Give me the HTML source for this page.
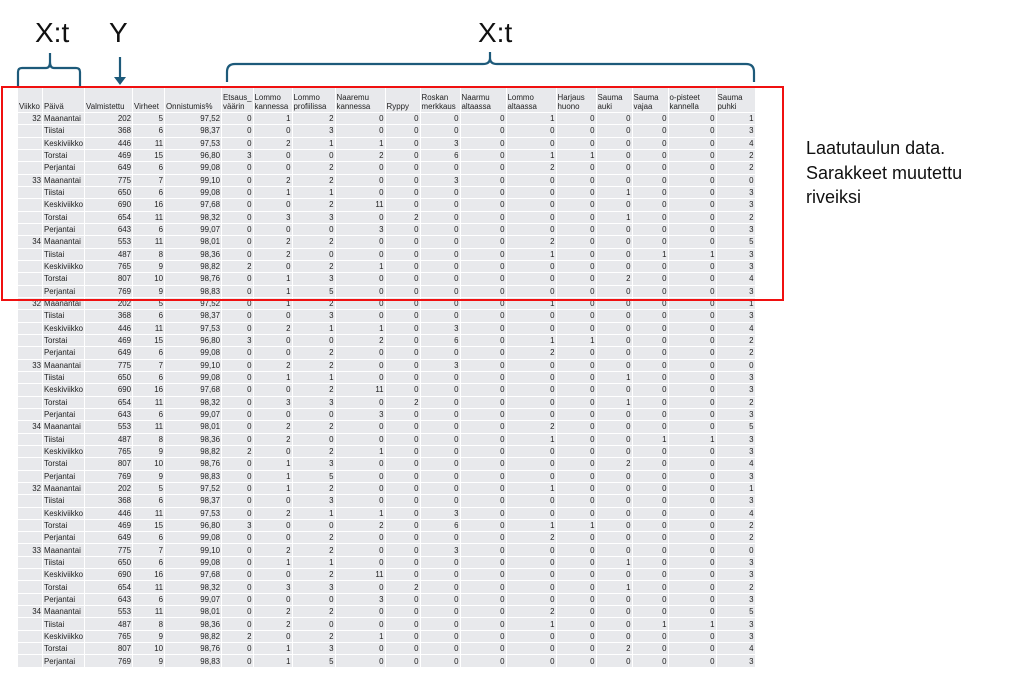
<!DOCTYPE html>
<html><head><meta charset="utf-8"><style>
body{margin:0;width:1024px;height:675px;background:#fff;position:relative;overflow:hidden;font-family:"Liberation Sans",sans-serif}
table{position:absolute;left:17px;top:86px;border-collapse:separate;border-spacing:1px;table-layout:fixed;font-size:7.9px;color:#222}
td{background:#e8e9ec;height:11.33px;padding:0 1px;text-align:right;white-space:nowrap;overflow:hidden;line-height:11px}
td.l{text-align:left}
tr.h td{height:24px;vertical-align:bottom;text-align:left;line-height:9px;padding-bottom:1px}
.box{position:absolute;left:1px;top:86px;width:779px;height:211px;border:2px solid #f01010}
.lab{position:absolute;font-size:28px;color:#111;line-height:28px}
.note{position:absolute;left:806px;top:136px;font-size:18px;line-height:24.5px;color:#111}
</style></head><body>
<div class="lab" style="left:35px;top:19px">X:t</div>
<div class="lab" style="left:109px;top:19px">Y</div>
<div class="lab" style="left:478px;top:19px">X:t</div>
<svg style="position:absolute;left:0;top:0" width="1024" height="100">
<g fill="none" stroke="#1d5a7a" stroke-width="2.2">
<path d="M18,86 V72 Q18,68 22,68 H46 Q50,68 50,62 V53 M50,62 Q50,68 54,68 H76 Q80,68 80,72 V86"/>
<path d="M120,57 V80"/>
<path d="M227,82 V72 Q227,64 235,64 H483 Q490,64 490,58 V52 M490,58 Q490,64 497,64 H746 Q754,64 754,72 V82"/>
</g>
<path d="M114,77 L126,77 L120,85 Z" fill="#1d5a7a"/>
</svg>
<div class="note">Laatutaulun data.<br>Sarakkeet muutettu<br>riveiksi</div>
<table>
<colgroup><col style="width:24px"><col style="width:41px"><col style="width:47px"><col style="width:31px"><col style="width:56px"><col style="width:30px"><col style="width:38px"><col style="width:42px"><col style="width:49px"><col style="width:34px"><col style="width:39px"><col style="width:45px"><col style="width:49px"><col style="width:39px"><col style="width:35px"><col style="width:35px"><col style="width:47px"><col style="width:38px"></colgroup>
<tr class="h"><td>Viikko</td><td>Päivä</td><td>Valmistettu</td><td>Virheet</td><td>Onnistumis%</td><td>Etsaus_<br>väärin</td><td>Lommo<br>kannessa</td><td>Lommo<br>profiilissa</td><td>Naaremu<br>kannessa</td><td>Ryppy</td><td>Roskan<br>merkkaus</td><td>Naarmu<br>altaassa</td><td>Lommo<br>altaassa</td><td>Harjaus<br>huono</td><td>Sauma<br>auki</td><td>Sauma<br>vajaa</td><td>o-pisteet<br>kannella</td><td>Sauma<br>puhki</td></tr>
<tr><td>32</td><td class="l">Maanantai</td><td>202</td><td>5</td><td>97,52</td><td>0</td><td>1</td><td>2</td><td>0</td><td>0</td><td>0</td><td>0</td><td>1</td><td>0</td><td>0</td><td>0</td><td>0</td><td>1</td></tr>
<tr><td></td><td class="l">Tiistai</td><td>368</td><td>6</td><td>98,37</td><td>0</td><td>0</td><td>3</td><td>0</td><td>0</td><td>0</td><td>0</td><td>0</td><td>0</td><td>0</td><td>0</td><td>0</td><td>3</td></tr>
<tr><td></td><td class="l">Keskiviikko</td><td>446</td><td>11</td><td>97,53</td><td>0</td><td>2</td><td>1</td><td>1</td><td>0</td><td>3</td><td>0</td><td>0</td><td>0</td><td>0</td><td>0</td><td>0</td><td>4</td></tr>
<tr><td></td><td class="l">Torstai</td><td>469</td><td>15</td><td>96,80</td><td>3</td><td>0</td><td>0</td><td>2</td><td>0</td><td>6</td><td>0</td><td>1</td><td>1</td><td>0</td><td>0</td><td>0</td><td>2</td></tr>
<tr><td></td><td class="l">Perjantai</td><td>649</td><td>6</td><td>99,08</td><td>0</td><td>0</td><td>2</td><td>0</td><td>0</td><td>0</td><td>0</td><td>2</td><td>0</td><td>0</td><td>0</td><td>0</td><td>2</td></tr>
<tr><td>33</td><td class="l">Maanantai</td><td>775</td><td>7</td><td>99,10</td><td>0</td><td>2</td><td>2</td><td>0</td><td>0</td><td>3</td><td>0</td><td>0</td><td>0</td><td>0</td><td>0</td><td>0</td><td>0</td></tr>
<tr><td></td><td class="l">Tiistai</td><td>650</td><td>6</td><td>99,08</td><td>0</td><td>1</td><td>1</td><td>0</td><td>0</td><td>0</td><td>0</td><td>0</td><td>0</td><td>1</td><td>0</td><td>0</td><td>3</td></tr>
<tr><td></td><td class="l">Keskiviikko</td><td>690</td><td>16</td><td>97,68</td><td>0</td><td>0</td><td>2</td><td>11</td><td>0</td><td>0</td><td>0</td><td>0</td><td>0</td><td>0</td><td>0</td><td>0</td><td>3</td></tr>
<tr><td></td><td class="l">Torstai</td><td>654</td><td>11</td><td>98,32</td><td>0</td><td>3</td><td>3</td><td>0</td><td>2</td><td>0</td><td>0</td><td>0</td><td>0</td><td>1</td><td>0</td><td>0</td><td>2</td></tr>
<tr><td></td><td class="l">Perjantai</td><td>643</td><td>6</td><td>99,07</td><td>0</td><td>0</td><td>0</td><td>3</td><td>0</td><td>0</td><td>0</td><td>0</td><td>0</td><td>0</td><td>0</td><td>0</td><td>3</td></tr>
<tr><td>34</td><td class="l">Maanantai</td><td>553</td><td>11</td><td>98,01</td><td>0</td><td>2</td><td>2</td><td>0</td><td>0</td><td>0</td><td>0</td><td>2</td><td>0</td><td>0</td><td>0</td><td>0</td><td>5</td></tr>
<tr><td></td><td class="l">Tiistai</td><td>487</td><td>8</td><td>98,36</td><td>0</td><td>2</td><td>0</td><td>0</td><td>0</td><td>0</td><td>0</td><td>1</td><td>0</td><td>0</td><td>1</td><td>1</td><td>3</td></tr>
<tr><td></td><td class="l">Keskiviikko</td><td>765</td><td>9</td><td>98,82</td><td>2</td><td>0</td><td>2</td><td>1</td><td>0</td><td>0</td><td>0</td><td>0</td><td>0</td><td>0</td><td>0</td><td>0</td><td>3</td></tr>
<tr><td></td><td class="l">Torstai</td><td>807</td><td>10</td><td>98,76</td><td>0</td><td>1</td><td>3</td><td>0</td><td>0</td><td>0</td><td>0</td><td>0</td><td>0</td><td>2</td><td>0</td><td>0</td><td>4</td></tr>
<tr><td></td><td class="l">Perjantai</td><td>769</td><td>9</td><td>98,83</td><td>0</td><td>1</td><td>5</td><td>0</td><td>0</td><td>0</td><td>0</td><td>0</td><td>0</td><td>0</td><td>0</td><td>0</td><td>3</td></tr>
<tr><td>32</td><td class="l">Maanantai</td><td>202</td><td>5</td><td>97,52</td><td>0</td><td>1</td><td>2</td><td>0</td><td>0</td><td>0</td><td>0</td><td>1</td><td>0</td><td>0</td><td>0</td><td>0</td><td>1</td></tr>
<tr><td></td><td class="l">Tiistai</td><td>368</td><td>6</td><td>98,37</td><td>0</td><td>0</td><td>3</td><td>0</td><td>0</td><td>0</td><td>0</td><td>0</td><td>0</td><td>0</td><td>0</td><td>0</td><td>3</td></tr>
<tr><td></td><td class="l">Keskiviikko</td><td>446</td><td>11</td><td>97,53</td><td>0</td><td>2</td><td>1</td><td>1</td><td>0</td><td>3</td><td>0</td><td>0</td><td>0</td><td>0</td><td>0</td><td>0</td><td>4</td></tr>
<tr><td></td><td class="l">Torstai</td><td>469</td><td>15</td><td>96,80</td><td>3</td><td>0</td><td>0</td><td>2</td><td>0</td><td>6</td><td>0</td><td>1</td><td>1</td><td>0</td><td>0</td><td>0</td><td>2</td></tr>
<tr><td></td><td class="l">Perjantai</td><td>649</td><td>6</td><td>99,08</td><td>0</td><td>0</td><td>2</td><td>0</td><td>0</td><td>0</td><td>0</td><td>2</td><td>0</td><td>0</td><td>0</td><td>0</td><td>2</td></tr>
<tr><td>33</td><td class="l">Maanantai</td><td>775</td><td>7</td><td>99,10</td><td>0</td><td>2</td><td>2</td><td>0</td><td>0</td><td>3</td><td>0</td><td>0</td><td>0</td><td>0</td><td>0</td><td>0</td><td>0</td></tr>
<tr><td></td><td class="l">Tiistai</td><td>650</td><td>6</td><td>99,08</td><td>0</td><td>1</td><td>1</td><td>0</td><td>0</td><td>0</td><td>0</td><td>0</td><td>0</td><td>1</td><td>0</td><td>0</td><td>3</td></tr>
<tr><td></td><td class="l">Keskiviikko</td><td>690</td><td>16</td><td>97,68</td><td>0</td><td>0</td><td>2</td><td>11</td><td>0</td><td>0</td><td>0</td><td>0</td><td>0</td><td>0</td><td>0</td><td>0</td><td>3</td></tr>
<tr><td></td><td class="l">Torstai</td><td>654</td><td>11</td><td>98,32</td><td>0</td><td>3</td><td>3</td><td>0</td><td>2</td><td>0</td><td>0</td><td>0</td><td>0</td><td>1</td><td>0</td><td>0</td><td>2</td></tr>
<tr><td></td><td class="l">Perjantai</td><td>643</td><td>6</td><td>99,07</td><td>0</td><td>0</td><td>0</td><td>3</td><td>0</td><td>0</td><td>0</td><td>0</td><td>0</td><td>0</td><td>0</td><td>0</td><td>3</td></tr>
<tr><td>34</td><td class="l">Maanantai</td><td>553</td><td>11</td><td>98,01</td><td>0</td><td>2</td><td>2</td><td>0</td><td>0</td><td>0</td><td>0</td><td>2</td><td>0</td><td>0</td><td>0</td><td>0</td><td>5</td></tr>
<tr><td></td><td class="l">Tiistai</td><td>487</td><td>8</td><td>98,36</td><td>0</td><td>2</td><td>0</td><td>0</td><td>0</td><td>0</td><td>0</td><td>1</td><td>0</td><td>0</td><td>1</td><td>1</td><td>3</td></tr>
<tr><td></td><td class="l">Keskiviikko</td><td>765</td><td>9</td><td>98,82</td><td>2</td><td>0</td><td>2</td><td>1</td><td>0</td><td>0</td><td>0</td><td>0</td><td>0</td><td>0</td><td>0</td><td>0</td><td>3</td></tr>
<tr><td></td><td class="l">Torstai</td><td>807</td><td>10</td><td>98,76</td><td>0</td><td>1</td><td>3</td><td>0</td><td>0</td><td>0</td><td>0</td><td>0</td><td>0</td><td>2</td><td>0</td><td>0</td><td>4</td></tr>
<tr><td></td><td class="l">Perjantai</td><td>769</td><td>9</td><td>98,83</td><td>0</td><td>1</td><td>5</td><td>0</td><td>0</td><td>0</td><td>0</td><td>0</td><td>0</td><td>0</td><td>0</td><td>0</td><td>3</td></tr>
<tr><td>32</td><td class="l">Maanantai</td><td>202</td><td>5</td><td>97,52</td><td>0</td><td>1</td><td>2</td><td>0</td><td>0</td><td>0</td><td>0</td><td>1</td><td>0</td><td>0</td><td>0</td><td>0</td><td>1</td></tr>
<tr><td></td><td class="l">Tiistai</td><td>368</td><td>6</td><td>98,37</td><td>0</td><td>0</td><td>3</td><td>0</td><td>0</td><td>0</td><td>0</td><td>0</td><td>0</td><td>0</td><td>0</td><td>0</td><td>3</td></tr>
<tr><td></td><td class="l">Keskiviikko</td><td>446</td><td>11</td><td>97,53</td><td>0</td><td>2</td><td>1</td><td>1</td><td>0</td><td>3</td><td>0</td><td>0</td><td>0</td><td>0</td><td>0</td><td>0</td><td>4</td></tr>
<tr><td></td><td class="l">Torstai</td><td>469</td><td>15</td><td>96,80</td><td>3</td><td>0</td><td>0</td><td>2</td><td>0</td><td>6</td><td>0</td><td>1</td><td>1</td><td>0</td><td>0</td><td>0</td><td>2</td></tr>
<tr><td></td><td class="l">Perjantai</td><td>649</td><td>6</td><td>99,08</td><td>0</td><td>0</td><td>2</td><td>0</td><td>0</td><td>0</td><td>0</td><td>2</td><td>0</td><td>0</td><td>0</td><td>0</td><td>2</td></tr>
<tr><td>33</td><td class="l">Maanantai</td><td>775</td><td>7</td><td>99,10</td><td>0</td><td>2</td><td>2</td><td>0</td><td>0</td><td>3</td><td>0</td><td>0</td><td>0</td><td>0</td><td>0</td><td>0</td><td>0</td></tr>
<tr><td></td><td class="l">Tiistai</td><td>650</td><td>6</td><td>99,08</td><td>0</td><td>1</td><td>1</td><td>0</td><td>0</td><td>0</td><td>0</td><td>0</td><td>0</td><td>1</td><td>0</td><td>0</td><td>3</td></tr>
<tr><td></td><td class="l">Keskiviikko</td><td>690</td><td>16</td><td>97,68</td><td>0</td><td>0</td><td>2</td><td>11</td><td>0</td><td>0</td><td>0</td><td>0</td><td>0</td><td>0</td><td>0</td><td>0</td><td>3</td></tr>
<tr><td></td><td class="l">Torstai</td><td>654</td><td>11</td><td>98,32</td><td>0</td><td>3</td><td>3</td><td>0</td><td>2</td><td>0</td><td>0</td><td>0</td><td>0</td><td>1</td><td>0</td><td>0</td><td>2</td></tr>
<tr><td></td><td class="l">Perjantai</td><td>643</td><td>6</td><td>99,07</td><td>0</td><td>0</td><td>0</td><td>3</td><td>0</td><td>0</td><td>0</td><td>0</td><td>0</td><td>0</td><td>0</td><td>0</td><td>3</td></tr>
<tr><td>34</td><td class="l">Maanantai</td><td>553</td><td>11</td><td>98,01</td><td>0</td><td>2</td><td>2</td><td>0</td><td>0</td><td>0</td><td>0</td><td>2</td><td>0</td><td>0</td><td>0</td><td>0</td><td>5</td></tr>
<tr><td></td><td class="l">Tiistai</td><td>487</td><td>8</td><td>98,36</td><td>0</td><td>2</td><td>0</td><td>0</td><td>0</td><td>0</td><td>0</td><td>1</td><td>0</td><td>0</td><td>1</td><td>1</td><td>3</td></tr>
<tr><td></td><td class="l">Keskiviikko</td><td>765</td><td>9</td><td>98,82</td><td>2</td><td>0</td><td>2</td><td>1</td><td>0</td><td>0</td><td>0</td><td>0</td><td>0</td><td>0</td><td>0</td><td>0</td><td>3</td></tr>
<tr><td></td><td class="l">Torstai</td><td>807</td><td>10</td><td>98,76</td><td>0</td><td>1</td><td>3</td><td>0</td><td>0</td><td>0</td><td>0</td><td>0</td><td>0</td><td>2</td><td>0</td><td>0</td><td>4</td></tr>
<tr><td></td><td class="l">Perjantai</td><td>769</td><td>9</td><td>98,83</td><td>0</td><td>1</td><td>5</td><td>0</td><td>0</td><td>0</td><td>0</td><td>0</td><td>0</td><td>0</td><td>0</td><td>0</td><td>3</td></tr>
</table>
<div class="box"></div>
</body></html>
